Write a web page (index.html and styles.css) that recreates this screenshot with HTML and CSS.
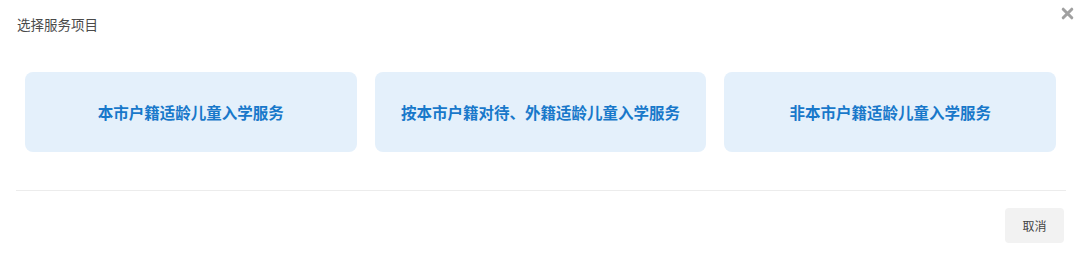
FILE: index.html
```html
<!DOCTYPE html>
<html lang="zh-CN">
<head>
<meta charset="utf-8">
<title>选择服务项目</title>
<link rel="stylesheet" href="styles.css">
</head>
<body>
<div class="dialog">
  <div class="title">选择服务项目</div>
  <span class="close" aria-label="关闭">
    <svg width="13" height="13" viewBox="0 0 13 13"><path d="M2.2 2.2 L10.8 10.8 M10.8 2.2 L2.2 10.8" stroke="#a0a0a0" stroke-width="3" stroke-linecap="round"/></svg>
  </span>
  <div class="cards">
    <div class="card">本市户籍适龄儿童入学服务</div>
    <div class="card">按本市户籍对待、外籍适龄儿童入学服务</div>
    <div class="card">非本市户籍适龄儿童入学服务</div>
  </div>
  <div class="divider"></div>
  <div class="footer">
    <button class="btn">取消</button>
  </div>
</div>
</body>
</html>
```

FILE: styles.css
```css
html, body {
  margin: 0;
  background: #fff;
}
body {
  font-family: "Noto Sans CJK SC", "Noto Sans", sans-serif;
}
.dialog {
  position: relative;
  width: 1080px;
  height: 256px;
}
.title {
  padding: 14px 17px 0;
  font-size: 13.5px;
  line-height: 20px;
  color: #4a4a4a;
}
.close {
  position: absolute;
  top: 7px;
  right: 6px;
  width: 13px;
  height: 13px;
  display: block;
}
.close svg { display: block; }
.cards {
  display: grid;
  grid-template-columns: repeat(3, 1fr);
  column-gap: 18px;
  padding: 38px 24px 38px 25px;
}
.card {
  height: 80px;
  border-radius: 8px;
  background: #e4f0fb;
  color: #1878ca;
  font-size: 15.5px;
  font-weight: 700;
  display: flex;
  align-items: center;
  justify-content: center;
}
.divider {
  margin: 0 14px 0 16px;
  border-top: 1px solid #ececec;
}
.footer {
  display: flex;
  justify-content: flex-end;
  padding: 17px 16px 0;
}
.btn {
  width: 59px;
  height: 35px;
  border: none;
  border-radius: 4px;
  background: #f2f2f2;
  color: #444;
  font-family: "Noto Sans CJK SC", sans-serif;
  font-size: 12px;
  padding: 0;
}
```
